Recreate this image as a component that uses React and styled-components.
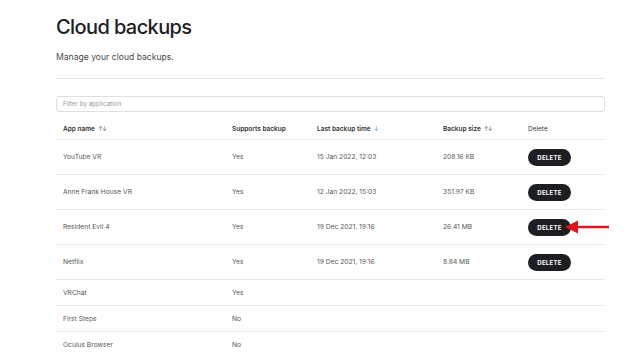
import React from "react";
import styled, { createGlobalStyle } from "styled-components";

const Global = createGlobalStyle`
  html, body { margin: 0; padding: 0; background: #fff; overflow: hidden; }
  body { font-family: Inter, "Noto Sans", sans-serif; color: #1c1e21; }
`;

const Page = styled.div`
  width: 640px;
  height: 356px;
  overflow: hidden;
  padding: 14px 35px 0 56px;
  box-sizing: border-box;
`;

const Title = styled.h1`
  margin: 0;
  font-size: 20px;
  font-weight: 500;
  letter-spacing: -0.6px;
  line-height: 26px;
  color: #1c1e21;
`;

const Subtitle = styled.p`
  margin: 11px 0 0;
  font-size: 8.6px;
  line-height: 12px;
  color: #4a4a4a;
`;

const Divider = styled.hr`
  margin: 15px 0 0;
  border: 0;
  border-top: 1px solid #e4e6e9;
`;

const Filter = styled.input`
  display: block;
  margin-top: 17px;
  width: 100%;
  height: 16px;
  box-sizing: border-box;
  border: 1px solid #dcdfe3;
  border-radius: 3px;
  padding: 0 6px;
  font-family: inherit;
  font-size: 6.3px;
  color: #333;
  outline: none;
  &::placeholder { color: #9a9a9a; }
`;

const Table = styled.div`
  margin-top: 6px;
`;

const cols = "169px 85px 126px 85px 1fr";

const HeadRow = styled.div`
  display: grid;
  grid-template-columns: ${cols};
  align-items: center;
  height: 21px;
  padding: 0 7px;
  border-bottom: 1px solid #eceef0;
`;

const HeadCell = styled.div`
  display: flex;
  align-items: center;
  gap: 3px;
  font-size: 6.5px;
  font-weight: ${(p) => (p.$plain ? 400 : 600)};
  color: #333333;
`;

const SortIcon = styled.span`
  font-size: 6px;
  letter-spacing: -1px;
  color: ${(p) => (p.$active ? "#4b8fd6" : "#666666")};
  font-weight: 400;
`;

const Row = styled.div`
  display: grid;
  grid-template-columns: ${cols};
  align-items: center;
  height: ${(p) => (p.$tall ? "34px" : "25px")};
  padding: 0 7px;
  border-bottom: 1px solid #e8e8e8;
`;

const Cell = styled.div`
  position: relative;
  font-size: 6.7px;
  color: #575757;
`;

const DeleteButton = styled.button`
  display: block;
  width: 43px;
  height: 17px;
  border: 0;
  border-radius: 9px;
  background: #1c1e21;
  color: #fff;
  font-family: inherit;
  font-size: 6px;
  font-weight: 700;
  letter-spacing: 0.3px;
  padding: 0;
  cursor: pointer;
`;

const Arrow = styled.svg`
  position: absolute;
  left: 37px;
  top: 50%;
  transform: translateY(-50%);
  width: 46px;
  height: 14px;
  overflow: visible;
`;

const rows = [
  { name: "YouTube VR", sup: "Yes", time: "15 Jan 2022, 12:03", size: "208.16 KB", del: true },
  { name: "Anne Frank House VR", sup: "Yes", time: "12 Jan 2022, 15:03", size: "351.97 KB", del: true },
  { name: "Resident Evil 4", sup: "Yes", time: "19 Dec 2021, 19:16", size: "26.41 MB", del: true, arrow: true },
  { name: "Netflix", sup: "Yes", time: "19 Dec 2021, 19:16", size: "8.84 MB", del: true },
  { name: "VRChat", sup: "Yes", time: "", size: "", del: false },
  { name: "First Steps", sup: "No", time: "", size: "", del: false },
  { name: "Oculus Browser", sup: "No", time: "", size: "", del: false },
];

export default function App() {
  return (
    <>
      <Global />
      <Page>
        <Title>Cloud backups</Title>
        <Subtitle>Manage your cloud backups.</Subtitle>
        <Divider />
        <Filter placeholder="Filter by application" />
        <Table>
          <HeadRow>
            <HeadCell>App name <SortIcon>↑↓</SortIcon></HeadCell>
            <HeadCell>Supports backup</HeadCell>
            <HeadCell>Last backup time <SortIcon $active>↓</SortIcon></HeadCell>
            <HeadCell>Backup size <SortIcon>↑↓</SortIcon></HeadCell>
            <HeadCell $plain>Delete</HeadCell>
          </HeadRow>
          {rows.map((r) => (
            <Row key={r.name} $tall={r.del}>
              <Cell>{r.name}</Cell>
              <Cell>{r.sup}</Cell>
              <Cell>{r.time}</Cell>
              <Cell>{r.size}</Cell>
              <Cell>
                {r.del && <DeleteButton>DELETE</DeleteButton>}
                {r.arrow && (
                  <Arrow viewBox="0 0 46 14">
                    <line x1="10" y1="7" x2="44" y2="7" stroke="#e0141b" strokeWidth="2.6" />
                    <polygon points="0,7 13,0.5 13,13.5" fill="#e0141b" />
                  </Arrow>
                )}
              </Cell>
            </Row>
          ))}
        </Table>
      </Page>
    </>
  );
}
